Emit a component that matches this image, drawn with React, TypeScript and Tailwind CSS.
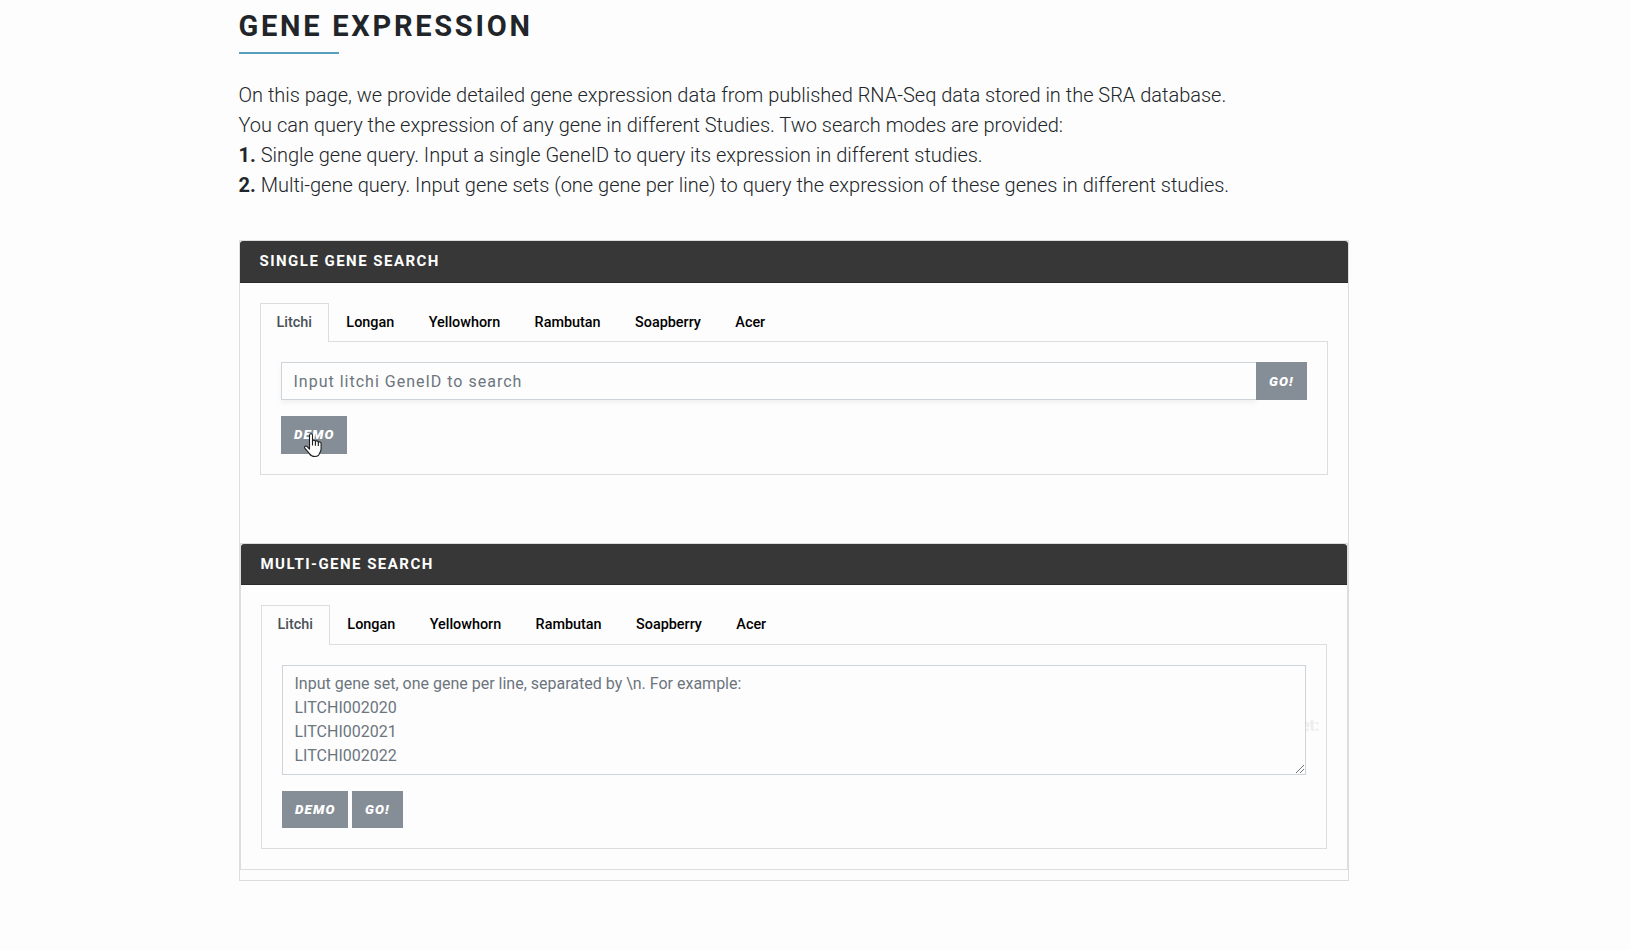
import type { ReactNode } from 'react';

const species = ['Litchi', 'Longan', 'Yellowhorn', 'Rambutan', 'Soapberry', 'Acer'];

function Tabs({ tall = false }: { tall?: boolean }) {
  return (
    <ul className={`flex gap-[0.45px] ${tall ? 'h-[39px]' : 'h-[38px]'} text-[14.4px] leading-[21px] font-medium`}>
      {species.map((name, i) => (
        <li
          key={name}
          className={
            i === 0
              ? 'relative z-10 border border-b-0 border-[#dcdddf] bg-[#fdfdfd] px-4 pt-[8px] text-[#495057] -mb-px'
              : 'border border-transparent px-4 pt-[8px] text-black'
          }
        >
          {name}
        </li>
      ))}
    </ul>
  );
}

function Button({ children, className }: { children: ReactNode; className: string }) {
  return (
    <button
      type="button"
      className={`flex shrink-0 items-center bg-[#858e96] pl-[13.4px] text-[13.4px] leading-[20px] font-black italic tracking-[1.2px] text-white ${className}`}
    >
      {children}
    </button>
  );
}

function Pointer() {
  return (
    <svg className="absolute left-[23px] top-[17px]" width="19" height="25" viewBox="0 0 19 25">
      <path
        d="M5.500 2.200c0-2 3-2 3 0v6c.4-1.400 2.800-1.200 2.900.4.600-1.200 2.900-.9 2.900.8.800-1 2.800-.6 2.800 1.200v5.200c0 2.300-.8 3.200-1.600 4.600-.5 2-1.700 3.100-4.600 3.100-3.200 0-4.300-.9-5.500-2.900L1 15.300C-.3 13.300 1.900 12.300 3.200 13.700l2.300 2.400z"
        fill="#fff"
        stroke="#1d1d1f"
        strokeWidth="1.1"
        strokeLinejoin="round"
      />
      <path d="M8.500 8v4.500M11.400 8.700v4M14.300 9.500v3.500" stroke="#1d1d1f" strokeWidth="1.1" />
    </svg>
  );
}

export default function App() {
  return (
    <main className="h-[950px] overflow-hidden bg-[#fdfdfd] pl-[238.5px] font-['Roboto',sans-serif] text-[#212529]">
      <div className="w-[1110px]">
        <h1 className="h-[52px] pt-[8px] text-[29px] leading-[36px] font-bold tracking-[2.74px]">GENE EXPRESSION</h1>
        <div className="h-[2px] w-[100px] bg-[#569fbd]" />
        <div className="mt-[26px] text-[20px] leading-[30px] font-light tracking-[-0.008px] whitespace-nowrap">
          <p>On this page, we provide detailed gene expression data from published RNA-Seq data stored in the SRA database.</p>
          <p>You can query the expression of any gene in different Studies. Two search modes are provided:</p>
          <p><b className="font-bold">1.</b> Single gene query. Input a single GeneID to query its expression in different studies.</p>
          <p><b className="font-bold">2.</b> Multi-gene query. Input gene sets (one gene per line) to query the expression of these genes in different studies.</p>
        </div>

        <section className="mt-[40px] h-[641px] border border-[#dcdddf]">
          <h2 className="h-[42px] rounded-t-[3px] border-b border-[#2b2a2b] bg-[#373737] pl-5 pt-[8px] text-[15px] leading-[24px] font-bold tracking-[1.47px] text-white">
            SINGLE GENE SEARCH
          </h2>
          <div className="px-5 pt-5">
            <Tabs />
            <div className="h-[134px] border border-[#dcdddf] p-5">
              <div className="flex h-[38px]">
                <input
                  className="min-w-0 flex-1 border border-r-0 border-[#ced4da] bg-[#fdfdfd] px-3 pt-[2px] text-[16px] tracking-[1px] shadow-[0_3px_5px_rgba(0,0,0,0.05)] outline-none placeholder:text-[#6c757d] placeholder:opacity-100"
                  placeholder="Input litchi GeneID to search"
                />
                <Button className="w-[51px] pt-[2px]">GO!</Button>
              </div>
              <div className="relative mt-4 w-[66px]">
                <Button className="h-[38px] w-[66px]">DEMO</Button>
                <Pointer />
              </div>
            </div>
          </div>

          <section className="mt-[68px] h-[327px] border border-[#dcdddf]">
            <h2 className="h-[41px] rounded-t-[3px] border-b border-[#2b2a2b] bg-[#373737] pl-5 pt-[8px] text-[15px] leading-[24px] font-bold tracking-[1.47px] text-white">
              MULTI-GENE SEARCH
            </h2>
            <div className="px-5 pt-5">
              <Tabs tall />
              <div className="relative h-[205px] border border-[#dcdddf] p-5">
                <span className="absolute right-[6px] top-[69px] text-[16px] leading-[24px] font-bold text-[#eeeeee]">et:</span>
                <div className="relative">
                  <textarea
                    className="block h-[110px] w-full resize-none border border-[#ced4da] bg-[#fdfdfd] px-3 py-[6px] text-[16px] leading-[24px] outline-none placeholder:text-[#6c757d] placeholder:opacity-100"
                    placeholder={'Input gene set, one gene per line, separated by \\n. For example:\nLITCHI002020\nLITCHI002021\nLITCHI002022'}
                  />
                  <svg className="absolute right-[2px] bottom-[2px]" width="8" height="8" viewBox="0 0 8 8" shapeRendering="crispEdges">
                    <path d="M0 8L8 0M4 8L8 4" stroke="#505357" strokeWidth="0.8" />
                  </svg>
                </div>
                <div className="mt-4 flex gap-1">
                  <Button className="h-[37px] w-[66px]">DEMO</Button>
                  <Button className="h-[37px] w-[51px]">GO!</Button>
                </div>
              </div>
            </div>
          </section>
        </section>
      </div>
    </main>
  );
}
